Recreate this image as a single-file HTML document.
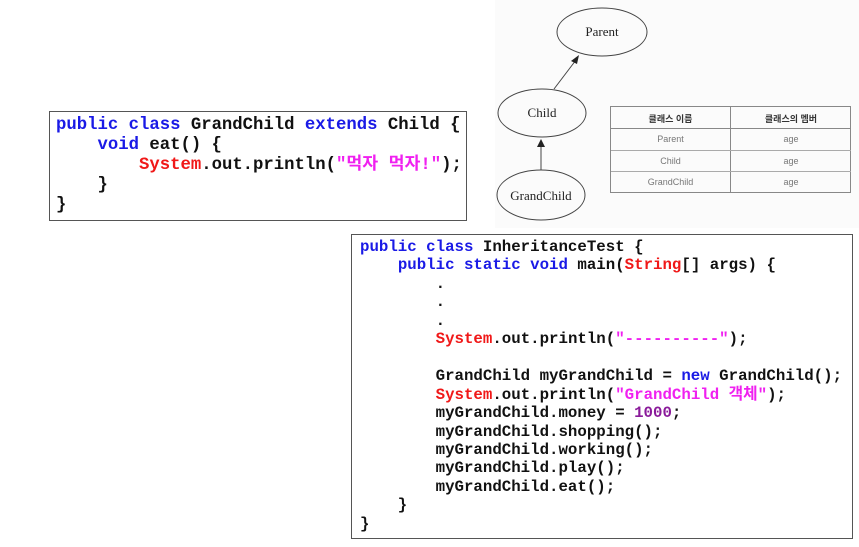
<!DOCTYPE html>
<html><head><meta charset="utf-8"><style>
body{margin:0;width:859px;height:547px;background:#fff;position:relative;overflow:hidden}
.box{position:absolute;border:1.5px solid #555;background:#fff;box-sizing:border-box}
pre{margin:0;font-family:"Liberation Mono","Noto Sans CJK KR",monospace;font-weight:bold;color:#111;white-space:pre}
.k{color:#1a1ae6}.r{color:#f01818}.s{color:#f020f0}.n{color:#8a1a9a}
#b1 pre{font-size:17.3px;line-height:20px;position:absolute;left:6px;top:4px}
#b2 pre{font-size:15.75px;line-height:18.45px;position:absolute;left:8px;top:3px}
.tbl{position:absolute;left:610px;top:106px;width:241px;height:87px;border:1px solid #888;box-sizing:border-box;font-family:"Liberation Sans","Noto Sans CJK KR",sans-serif;font-size:9px;color:#777}
.tbl div{position:absolute;text-align:center}
</style></head><body>
<div style="position:absolute;left:495px;top:0;width:364px;height:228px;background:#fbfbfb"></div>
<svg style="position:absolute;left:0;top:0" width="859" height="547">
<g fill="none" stroke="#444" stroke-width="1">
<ellipse cx="602" cy="32" rx="45" ry="24"/>
<ellipse cx="542" cy="113" rx="44" ry="24"/>
<ellipse cx="541" cy="195" rx="44" ry="25"/>
<line x1="554" y1="89" x2="576" y2="60"/>
<line x1="541" y1="170" x2="541" y2="146"/>
</g>
<polygon points="579,55 571,61 577,64" fill="#222"/>
<polygon points="541,139 537,147 545,147" fill="#222"/>
<g font-family="Liberation Serif,serif" font-size="13" fill="#222" text-anchor="middle">
<text x="602" y="36">Parent</text><text x="542" y="117">Child</text><text x="541" y="200">GrandChild</text>
</g>
</svg>
<div class="tbl">
<div style="left:119px;top:0;width:1px;height:86px;background:#888"></div>
<div style="left:0;top:21px;width:240px;height:1px;background:#888"></div>
<div style="left:0;top:43px;width:240px;height:1px;background:#aaa"></div>
<div style="left:0;top:64px;width:240px;height:1px;background:#aaa"></div>
<div style="left:0;top:5px;width:119px;color:#333;font-weight:bold">클래스 이름</div>
<div style="left:120px;top:5px;width:120px;color:#333;font-weight:bold">클래스의 멤버</div>
<div style="left:0;top:27px;width:119px">Parent</div><div style="left:120px;top:27px;width:120px">age</div>
<div style="left:0;top:49px;width:119px">Child</div><div style="left:120px;top:49px;width:120px">age</div>
<div style="left:0;top:70px;width:119px">GrandChild</div><div style="left:120px;top:70px;width:120px">age</div>
</div>
<div class="box" id="b1" style="left:49px;top:111px;width:418px;height:110px"><pre><span class="k">public class</span> GrandChild <span class="k">extends</span> Child {
    <span class="k">void</span> eat() {
        <span class="r">System</span>.out.println(<span class="s">"먹자 먹자!"</span>);
    }
}</pre></div>
<div class="box" id="b2" style="left:351px;top:234px;width:502px;height:305px"><pre><span class="k">public class</span> InheritanceTest {
    <span class="k">public static void</span> main(<span class="r">String</span>[] args) {
        .
        .
        .
        <span class="r">System</span>.out.println(<span class="s">"----------"</span>);

        GrandChild myGrandChild = <span class="k">new</span> GrandChild();
        <span class="r">System</span>.out.println(<span class="s">"GrandChild 객체"</span>);
        myGrandChild.money = <span class="n">1000</span>;
        myGrandChild.shopping();
        myGrandChild.working();
        myGrandChild.play();
        myGrandChild.eat();
    }
}</pre></div>
</body></html>
